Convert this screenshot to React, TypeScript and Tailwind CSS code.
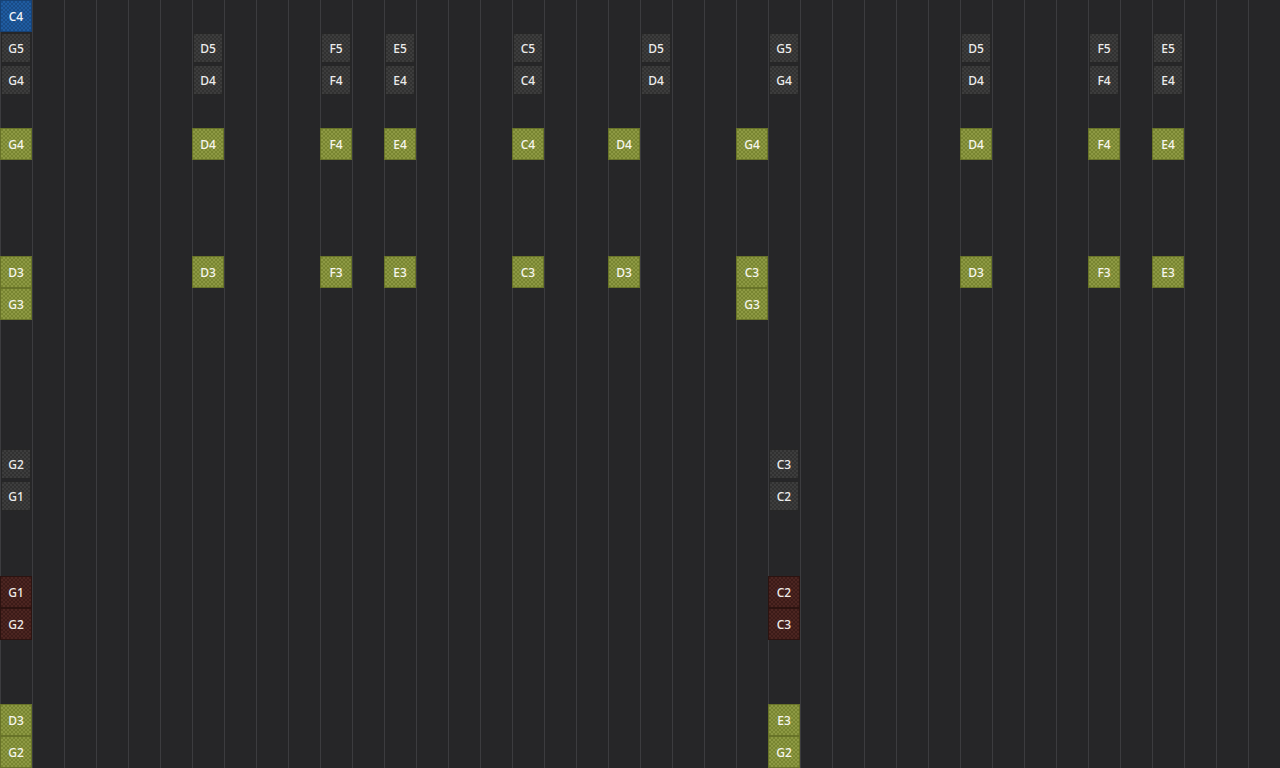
import React from "react";

type Kind = "blue" | "gray" | "olive" | "brown";
type Cell = { c: number; r: number; t: string; k: Kind };

const cells: Cell[] = [];
const add = (r: number, k: Kind, items: [number, string][]) => {
  items.forEach(([c, t]) => cells.push({ c, r, t, k }));
};

add(0, "blue", [[0, "C4"]]);
add(1, "gray", [[0, "G5"], [6, "D5"], [10, "F5"], [12, "E5"], [16, "C5"], [20, "D5"], [24, "G5"], [30, "D5"], [34, "F5"], [36, "E5"]]);
add(2, "gray", [[0, "G4"], [6, "D4"], [10, "F4"], [12, "E4"], [16, "C4"], [20, "D4"], [24, "G4"], [30, "D4"], [34, "F4"], [36, "E4"]]);
add(4, "olive", [[0, "G4"], [6, "D4"], [10, "F4"], [12, "E4"], [16, "C4"], [19, "D4"], [23, "G4"], [30, "D4"], [34, "F4"], [36, "E4"]]);
add(8, "olive", [[0, "D3"], [6, "D3"], [10, "F3"], [12, "E3"], [16, "C3"], [19, "D3"], [23, "C3"], [30, "D3"], [34, "F3"], [36, "E3"]]);
add(9, "olive", [[0, "G3"], [23, "G3"]]);
add(14, "gray", [[0, "G2"], [24, "C3"]]);
add(15, "gray", [[0, "G1"], [24, "C2"]]);
add(18, "brown", [[0, "G1"], [24, "C2"]]);
add(19, "brown", [[0, "G2"], [24, "C3"]]);
add(22, "olive", [[0, "D3"], [24, "E3"]]);
add(23, "olive", [[0, "G2"], [24, "G2"]]);

const lookup = new Map<string, Cell>();
cells.forEach((x) => lookup.set(`${x.r}-${x.c}`, x));

const kindClass: Record<Kind, string> = {
  blue:
    "w-[32px] h-[32px] border border-[#164276] bg-[#1e5a9e] bg-[image:repeating-conic-gradient(#1f5ca1_0_25%,#194c88_0_50%)] bg-[length:4px_4px] text-[#f2f4f8]",
  gray:
    "w-[30px] h-[30px] m-px border border-[#262626] bg-[#393939] bg-[image:repeating-conic-gradient(#3d3d3d_0_25%,#313131_0_50%)] bg-[length:4px_4px] text-[#ececec]",
  olive:
    "w-[32px] h-[32px] border border-[#687329] bg-[#8a9641] bg-[image:repeating-conic-gradient(#8d9943_0_25%,#788531_0_50%)] bg-[length:4px_4px] text-[#f6f6ee]",
  brown:
    "w-[32px] h-[32px] border border-[#2c1310] bg-[#4a231f] bg-[image:repeating-conic-gradient(#4c2521_0_25%,#3c1b18_0_50%)] bg-[length:4px_4px] text-[#f0ece8]",
};

export default function App() {
  const rows = Array.from({ length: 24 }, (_, r) => r);
  const cols = Array.from({ length: 40 }, (_, c) => c);
  return (
    <div className="w-[1280px] h-[768px] overflow-hidden bg-[#262628] bg-[image:linear-gradient(to_right,#3c3c3f_1px,transparent_1px)] bg-[length:32px_32px] font-['Noto_Sans',sans-serif]">
      <div className="grid grid-cols-[repeat(40,32px)] grid-rows-[repeat(24,32px)]">
        {rows.map((r) =>
          cols.map((c) => {
            const cell = lookup.get(`${r}-${c}`);
            if (!cell) return <div key={`${r}-${c}`} />;
            return (
              <div key={`${r}-${c}`} className="w-[32px] h-[32px]">
                <div
                  className={`flex items-center justify-center pt-[2px] text-[12px] font-medium leading-none ${kindClass[cell.k]}`}
                >
                  {cell.t}
                </div>
              </div>
            );
          })
        )}
      </div>
    </div>
  );
}
